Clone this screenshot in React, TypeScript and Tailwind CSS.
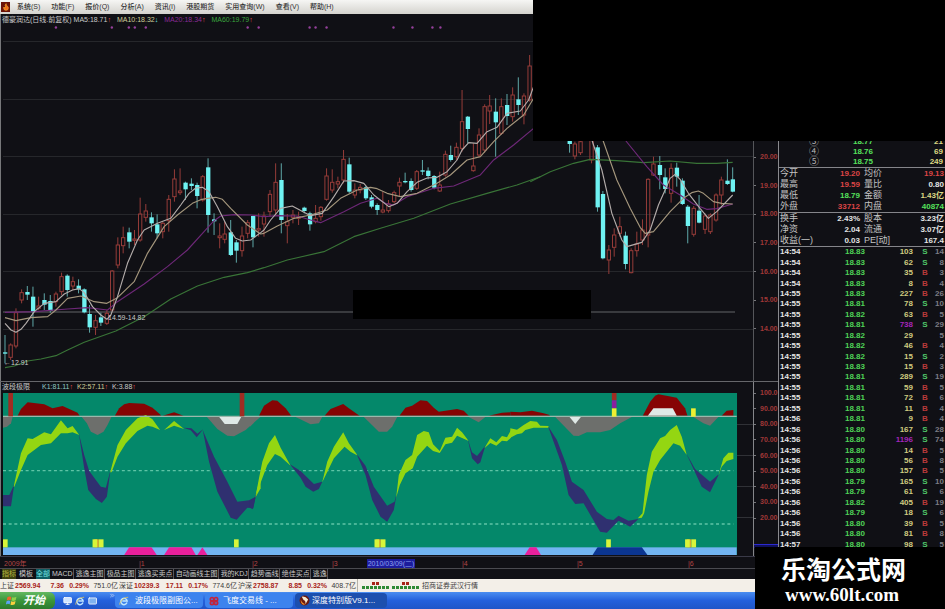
import React from 'react';
import { ChevronsRight, Monitor, Mail, Flame } from 'lucide-react';

// [direction, x, high, bodyTop, bodyBottom, low] - chart units are thirds of a pixel
type Candle = ['u' | 'd', number, number, number, number, number];

interface ChartSegment {
  dx: number;
  dy: number;
  candles: Candle[];
  ma5: string;
  ma10: string;
  ma20: string;
  ma60: string;
}

const SEGMENTS: ChartSegment[] = [
  {
    dx: 0,
    dy: 390,
    candles: [
      ['d', 12, 615, 667, 671, 700], ['u', 29, 640, 645, 682, 690], ['u', 45, 535, 548, 648, 655],
      ['u', 62, 478, 488, 510, 520], ['d', 79, 468, 486, 494, 510], ['d', 96, 470, 500, 545, 590],
      ['u', 113, 500, 528, 535, 540], ['d', 130, 490, 510, 524, 540], ['d', 148, 495, 513, 543, 548],
      ['u', 165, 485, 492, 515, 530], ['u', 182, 428, 440, 485, 495], ['d', 199, 433, 437, 480, 500],
      ['u', 216, 440, 455, 468, 480], ['d', 233, 448, 467, 478, 490], ['d', 250, 475, 478, 547, 550],
      ['d', 266, 525, 552, 592, 608], ['u', 284, 555, 572, 592, 615], ['d', 300, 548, 562, 578, 588],
      ['u', 318, 540, 550, 580, 585], ['u', 334, 420, 423, 540, 545], ['u', 351, 322, 345, 405, 415],
      ['u', 367, 290, 323, 347, 370], ['d', 385, 293, 307, 335, 355], ['u', 401, 300, 327, 331, 345],
      ['u', 418, 203, 252, 330, 335], ['u', 435, 222, 243, 262, 275], ['d', 452, 247, 262, 280, 305],
      ['d', 469, 253, 283, 310, 325], ['u', 486, 275, 280, 305, 325], ['u', 504, 195, 208, 272, 305],
      ['u', 521, 118, 147, 200, 215], ['u', 538, 115, 183, 188, 195], ['d', 554, 155, 158, 178, 210],
      ['d', 572, 145, 161, 168, 180], ['d', 589, 158, 165, 198, 235], ['u', 606, 135, 140, 210, 215],
      ['d', 622, 85, 112, 255, 308], ['d', 640, 250, 268, 274, 315], ['u', 657, 280, 318, 323, 355],
      ['u', 672, 275, 312, 328, 340], ['d', 690, 270, 307, 375, 378], ['d', 707, 330, 337, 362, 398],
      ['u', 724, 290, 318, 362, 380], ['u', 741, 270, 278, 310, 325], ['d', 757, 257, 258, 322, 352],
      ['u', 774, 250, 296, 300, 320], ['u', 790, 245, 258, 282, 320],
    ],
    ma5: '12,580 30,600 45,607 60,598 75,580 100,545 130,520 165,515 190,492 215,480 235,476 250,488 275,530 300,555 318,568 330,555 350,500 380,400 410,330 430,300 470,280 510,265 540,225 565,190 585,174 605,172 625,185 650,230 680,290 705,325 725,333 750,330 780,308 790,300',
    ma10: '12,563 45,572 90,563 140,560 165,540 200,505 240,498 280,515 318,520 350,503 400,455 440,370 490,290 530,255 575,220 600,209 620,205 645,202 665,208 690,235 740,285 780,312 790,310',
    ma20: '12,547 100,545 200,537 260,533 320,540 350,515 430,462 500,410 560,360 610,305 640,272 660,258 700,254 750,255 790,260',
    ma60: '12,713 40,708 80,693 120,687 165,677 200,660 250,637 345,603 430,560 510,507 590,468 670,442 740,428 790,413',
  },
  {
    dx: 780,
    dy: 180,
    candles: [
      ['u', 28, 390, 403, 455, 470], ['u', 45, 310, 367, 450, 465], ['d', 62, 310, 360, 480, 520],
      ['u', 80, 462, 485, 497, 550], ['u', 97, 450, 465, 472, 490], ['u', 114, 455, 470, 475, 495],
      ['d', 131, 440, 443, 453, 460], ['d', 148, 455, 460, 493, 512], ['u', 165, 435, 475, 485, 490],
      ['u', 181, 438, 442, 470, 482], ['u', 198, 325, 348, 418, 422], ['u', 215, 328, 367, 390, 398],
      ['u', 232, 350, 365, 372, 385], ['u', 249, 270, 298, 360, 370], ['d', 266, 293, 313, 395, 400],
      ['u', 283, 370, 390, 405, 415], ['u', 299, 372, 382, 390, 400], ['d', 316, 378, 382, 415, 420],
      ['d', 333, 405, 412, 440, 445], ['d', 350, 430, 435, 450, 465], ['u', 367, 395, 450, 456, 460],
      ['u', 384, 420, 432, 452, 458], ['u', 401, 392, 398, 425, 430], ['u', 417, 353, 367, 378, 410],
      ['d', 434, 338, 363, 367, 370], ['d', 452, 355, 363, 390, 395], ['u', 469, 330, 335, 385, 390],
      ['d', 486, 300, 331, 335, 345], ['d', 503, 322, 332, 348, 358], ['d', 521, 345, 348, 383, 388],
      ['u', 538, 335, 375, 393, 396], ['u', 555, 272, 283, 345, 350], ['d', 571, 257, 285, 300, 305],
      ['u', 588, 248, 262, 290, 300], ['u', 605, 90, 185, 265, 275], ['d', 622, 168, 170, 207, 250],
      ['u', 639, 250, 318, 332, 335], ['u', 656, 205, 225, 285, 292], ['u', 673, 133, 140, 270, 278],
      ['u', 688, 105, 138, 153, 192], ['d', 706, 115, 155, 187, 290], ['u', 723, 115, 140, 220, 225],
      ['d', 740, 102, 135, 168, 195], ['u', 757, 82, 105, 170, 185], ['d', 774, 52, 118, 135, 165],
      ['u', 791, 100, 108, 165, 193], ['u', 808, -15, 18, 120, 125],
    ],
    ma5: '10,510 30,480 60,445 95,438 130,457 150,467 185,460 220,410 250,363 280,362 310,370 340,405 385,440 410,430 440,395 470,367 500,354 530,352 560,335 590,300 605,270 625,248 650,250 680,215 710,202 740,160 780,153 805,120 820,80',
    ma10: '10,520 50,498 100,475 150,465 200,450 240,415 290,390 330,382 350,386 380,400 420,410 470,400 530,370 570,345 620,300 660,290 700,245 740,205 790,165 820,115',
    ma20: '10,470 50,467 110,468 150,480 180,488 250,455 300,430 350,415 375,430 400,435 440,410 520,385 580,378 660,345 700,300 760,255 820,205',
    ma60: '10,623 80,600 190,575 280,530 360,505 460,475 570,432 680,400 770,375 840,350',
  },
  {
    dx: 1590,
    dy: 390,
    candles: [
      ['d', 118, 20, 22, 42, 68], ['u', 134, 35, 42, 78, 88], ['u', 151, 30, 35, 68, 75],
      ['u', 184, 20, 22, 90, 100], ['d', 202, 45, 52, 232, 245], ['d', 218, 183, 192, 385, 388],
      ['u', 236, 345, 360, 390, 432], ['u', 252, 295, 315, 352, 380], ['u', 269, 260, 290, 310, 320],
      ['d', 286, 305, 317, 402, 418], ['u', 303, 355, 362, 428, 430], ['u', 320, 305, 342, 362, 380],
      ['u', 337, 268, 300, 330, 345], ['u', 354, 145, 148, 315, 352], ['u', 370, 80, 102, 135, 138],
      ['d', 389, 78, 105, 135, 178], ['d', 405, 115, 142, 177, 190], ['u', 423, 100, 115, 190, 218],
      ['d', 440, 98, 113, 140, 170], ['d', 457, 145, 152, 222, 225], ['d', 473, 225, 230, 288, 340],
      ['u', 491, 228, 235, 313, 320], ['d', 507, 195, 242, 278, 280], ['u', 525, 250, 258, 298, 312],
      ['u', 541, 250, 255, 305, 312], ['u', 558, 190, 195, 270, 275], ['u', 574, 140, 150, 195, 225],
      ['d', 592, 88, 152, 162, 165], ['d', 608, 112, 148, 185, 187],
    ],
    ma5: '185,30 215,120 245,250 275,330 290,350 335,337 360,300 385,225 405,180 420,145 435,133 450,148 475,190 510,235 535,265 560,245 608,195',
    ma10: '218,30 260,150 300,235 330,292 345,310 370,305 420,245 460,205 485,188 505,183 520,190 550,215 575,220 608,222',
    ma20: '285,30 350,110 400,165 450,195 490,222 530,238 560,236 608,222',
    ma60: '0,155 60,125 130,100 180,88 260,92 340,98 420,93 500,100 560,100 608,97',
  },
];

const GRID_LINES = [41, 99, 156, 214, 271, 329];
const SIGNAL_DOTS = [55, 111, 128, 134, 145, 247, 258, 309, 315, 326, 393, 412, 432, 440];

const RED = '#860404';
const GREY = '#6d6f6c';
const LIME = '#94d612';
const NAVY = '#2f3070';
const WHITE = '#dfe9e6';
const PINK = '#e8209c';

// [fill, points] - indicator areas, same units as the candles
const AREAS: { dx: number; shapes: [string, string][] }[] = [
  {
    dx: 0,
    shapes: [
      [RED, '50,122 60,102 80,82 130,88 155,100 185,93 205,102 230,113 236,122'],
      [RED, '342,122 355,100 370,88 385,84 430,86 455,98 480,120 480,122'],
      [RED, '486,122 520,112 548,122'],
      [GREY, '6,125 35,125 30,145 18,155 6,158'],
      [GREY, '242,125 332,125 320,150 308,170 290,180 270,170 258,145'],
      [GREY, '618,125 780,125 735,165 700,184 680,182 650,162'],
      [WHITE, '655,125 722,125 710,147 672,147'],
      [NAVY, '6,360 25,360 40,328 30,394 6,394'],
      [LIME, '38,335 60,235 80,190 95,192 130,172 150,178 180,136 200,160 215,153 235,180 215,172 200,175 180,175 150,205 120,210 80,240 60,285 40,335'],
      [NAVY, '234,176 250,240 265,288 300,335 315,338 329,285 318,365 303,384 285,372 262,345 250,280'],
      [LIME, '328,292 350,210 375,165 410,130 435,120 455,133 478,165 455,155 440,152 410,168 375,205 350,245 332,292'],
      [LIME, '490,165 520,138 550,162 520,152'],
      [NAVY, '548,158 572,160 590,176 607,163 588,187 570,166'],
      [NAVY, '606,165 640,245 680,320 710,380 745,376 765,365 758,400 740,398 708,434 690,428 650,350 625,260'],
      [LIME, '763,370 780,300 780,340'],
      [PINK, '370,540 385,517 452,517 468,540'],
      [PINK, '490,540 505,517 572,517 585,540'],
      [PINK, '590,540 605,517 620,540'],
    ],
  },
  {
    dx: 750,
    shapes: [
      [RED, '25,122 40,92 65,76 80,77 105,100 122,122'],
      [RED, '222,122 240,102 278,87 295,100 327,122'],
      [RED, '447,122 465,98 485,92 510,76 530,78 550,98 565,110 620,102 640,107 655,122'],
      [RED, '715,122 755,113 780,112 780,122'],
      [GREY, '-2,126 17,126 8,145 -2,155'],
      [GREY, '135,126 215,126 205,145 180,148'],
      [GREY, '340,126 440,126 425,155 410,170 385,170'],
      [GREY, '655,126 705,126 685,142'],
      [NAVY, '-2,378 10,375 18,352 6,403 -2,398'],
      [LIME, '15,362 25,310 35,260 55,205 73,180 90,218 120,272 90,245 73,237 50,270 35,310'],
      [NAVY, '118,268 150,288 190,327 215,320 205,342 188,350 165,335 150,308'],
      [LIME, '215,322 230,260 250,215 278,172 295,205 322,242 300,230 282,215 250,250'],
      [NAVY, '318,236 345,272 370,335 410,392 432,380 439,355 430,405 410,440 390,425 365,375 345,300'],
      [LIME, '437,368 445,300 465,255 485,240 500,180 520,168 535,172 548,208 568,228 585,188 605,185 620,158 635,172 655,198 620,182 605,203 585,208 568,234 548,228 530,212 500,245 487,280 465,295 448,330'],
      [NAVY, '652,192 665,232 680,243 705,212 690,262 682,268 665,250'],
      [LIME, '702,220 720,190 738,202 755,183 770,187 782,165 782,188 770,199 755,197 738,212 720,204'],
    ],
  },
  {
    dx: 1530,
    shapes: [
      [RED, '0,110 30,112 65,107 100,115 118,120 118,122 0,122'],
      [RED, '398,122 420,80 435,62 445,58 500,68 525,100 532,122'],
      [RED, '635,122 650,107 670,105 670,122'],
      [WHITE, '413,122 430,100 488,100 500,122'],
      [GREY, '135,126 365,126 330,145 300,165 270,172 230,172 205,183 190,182'],
      [GREY, '550,126 625,126 600,152 580,145'],
      [WHITE, '178,126 212,126 195,147'],
      [LIME, '0,160 20,164 40,150 60,138 80,140 90,152 115,153 115,158 90,158 70,158 45,165 35,175 20,178 0,188'],
      [NAVY, '113,153 140,195 165,260 185,320 220,345 260,410 290,432 310,435 325,422 355,437 385,432 360,455 325,437 290,473 270,470 220,385 195,387 175,360 155,270'],
      [LIME, '383,430 397,415 410,300 425,230 450,190 465,183 480,165 500,150 515,185 530,240 510,212 490,205 450,255 430,290 415,350 402,415 395,428'],
      [NAVY, '528,234 555,282 600,320 627,297 600,352 575,335'],
      [LIME, '625,302 640,250 655,233 670,233 670,252 650,258 635,275'],
      [PINK, '43,540 58,517 78,517 92,540'],
      ['#0b3591', '247,540 262,517 395,517 412,540'],
    ],
  },
];

// [x, y, height, fill]
const MARKERS: [number, number, number, string][] = [
  [22, 54, 70, '#a02c22'], [717, 54, 70, '#a02c22'], [1835, 54, 22, '#a02c22'], [1835, 76, 24, '#8a1fa0'],
  [1835, 100, 25, '#eef032'], [2073, 100, 25, '#eef032'], [6, 493, 24, '#d8f53a'], [280, 493, 24, '#d8a82a'],
  [275, 493, 24, '#d8f53a'], [294, 493, 24, '#d8f53a'], [700, 493, 24, '#d8f53a'], [1127, 493, 24, '#d8a82a'],
  [1122, 493, 24, '#d8f53a'], [1141, 493, 24, '#d8f53a'], [1818, 493, 24, '#d8f53a'], [2060, 493, 24, '#d8a82a'],
  [2055, 493, 24, '#d8f53a'], [2074, 493, 24, '#d8f53a'],
];

const MENU = ['系统(S)', '功能(F)', '报价(Q)', '分析(A)', '资讯(I)', '港股期货', '实用查询(W)', '查看(V)', '帮助(H)'];

const TABS = ['MACD', '逃逸主图', '极品主图', '逃逸买卖点', '自动画线主图', '我的KDJ', '趋势画线', '绝佳买点', '逃逸'];

const BOOK = [
  ['③', '18.77', '21'],
  ['④', '18.76', '69'],
  ['⑤', '18.75', '249'],
];

const C_RED = 'text-[#dc4545]';
const C_GREEN = 'text-[#56e05c]';
const C_YELLOW = 'text-[#dcd884]';
const C_WHITE = 'text-[#e4e4e4]';

const QUOTES = [
  ['今开', '19.20', C_RED, '均价', '19.13', C_RED],
  ['最高', '19.59', C_RED, '量比', '0.80', C_WHITE],
  ['最低', '18.79', C_GREEN, '金额', '1.43亿', C_YELLOW],
  ['外盘', '33712', C_RED, '内盘', '40874', C_GREEN],
];

const FUNDAMENTALS = [
  ['换手', '2.43%', C_WHITE, '股本', '3.23亿', C_WHITE],
  ['净资', '2.04', C_WHITE, '流通', '3.07亿', C_WHITE],
  ['收益(一)', '0.03', C_WHITE, 'PE[动]', '167.4', C_WHITE],
];

const TRADES = [
  ['14:54', '18.83', '103', 'S', '14'], ['14:54', '18.83', '62', 'S', '8'], ['14:54', '18.83', '35', 'B', '3'],
  ['14:54', '18.83', '8', 'B', '4'], ['14:55', '18.83', '227', 'B', '26'], ['14:55', '18.81', '78', 'S', '10'],
  ['14:55', '18.82', '63', 'B', '5'], ['14:55', '18.81', '738', 'S', '29'], ['14:55', '18.82', '29', '', '5'],
  ['14:55', '18.82', '46', 'B', '4'], ['14:55', '18.82', '15', 'S', '2'], ['14:55', '18.83', '15', 'B', '3'],
  ['14:55', '18.81', '289', 'S', '19'], ['14:55', '18.81', '59', 'B', '5'], ['14:55', '18.81', '72', 'B', '6'],
  ['14:55', '18.81', '11', 'B', '4'], ['14:56', '18.81', '9', 'B', '4'], ['14:56', '18.80', '167', 'S', '28'],
  ['14:56', '18.80', '1196', 'S', '74'], ['14:56', '18.80', '14', 'B', '5'], ['14:56', '18.80', '56', 'B', '8'],
  ['14:56', '18.80', '157', 'B', '5'], ['14:56', '18.79', '165', 'S', '10'], ['14:56', '18.79', '61', 'S', '6'],
  ['14:56', '18.82', '405', 'B', '19'], ['14:56', '18.79', '18', 'S', '6'], ['14:56', '18.80', '39', 'B', '5'],
  ['14:56', '18.80', '81', 'B', '8'], ['14:57', '18.80', '98', 'S', '5'],
];

const MenuBar = () => (
  <nav className="flex h-[14px] items-center bg-gradient-to-b from-[#f6f6f4] to-[#d4d3ce] pl-px text-[7px] font-medium leading-[14px] text-[#333]">
    <span className="flex h-[10px] w-[9px] items-center justify-center bg-[#6b1208]">
      <Flame size={8} className="text-[#ffb52e]" fill="#f26a1b" />
    </span>
    <div className="flex gap-[11px] pl-[7px]">
      {MENU.map((item) => (
        <button key={item} type="button" className="whitespace-nowrap">{item}</button>
      ))}
    </div>
  </nav>
);

const Up = () => <span className="font-bold text-[#f05050]">↑</span>;

const CandleChart = () => (
  <svg viewBox="0 26 753 355" preserveAspectRatio="none" className="block h-[355px] w-full">
    {GRID_LINES.map((y) => (
      <line key={y} x1="2" x2="753" y1={y + 0.5} y2={y + 0.5} stroke="#26272b" />
    ))}
    <line x1="2" x2="735" y1="312" y2="312" stroke="#47484c" strokeWidth="1.4" />
    {SIGNAL_DOTS.map((x) => (
      <circle key={x} cx={x} cy="27.5" r="1.2" fill="#95409c" />
    ))}
    <g transform="scale(0.33333)">
      {SEGMENTS.map((seg) => (
        <g key={seg.dx} transform={`translate(${seg.dx} ${seg.dy})`} fill="none">
          {seg.candles.map(([dir, x, high, top, bottom, low]) =>
            dir === 'd' ? (
              <g key={x}>
                <line x1={x} x2={x} y1={high} y2={low} stroke="#5fa9a9" strokeWidth="3" />
                <rect x={x - 6} y={top} width="13" height={bottom - top} fill="#6ff2f2" />
              </g>
            ) : (
              <g key={x} stroke="#963c39" strokeWidth="3">
                <path d={`M${x} ${high}V${top}M${x} ${bottom}V${low}`} />
                <rect x={x - 5} y={top} width="10" height={bottom - top} />
              </g>
            )
          )}
          <g strokeWidth="3.4" strokeLinejoin="round">
            <polyline points={seg.ma60} stroke="#397437" />
            <polyline points={seg.ma20} stroke="#6e2878" />
            <polyline points={seg.ma10} stroke="#a5977d" />
            <polyline points={seg.ma5} stroke="#b4adab" />
          </g>
        </g>
      ))}
    </g>
  </svg>
);

const IndicatorChart = () => (
  <svg viewBox="0 393 753 163" preserveAspectRatio="none" className="block h-[163px] w-full">
    <rect x="2" y="393" width="735" height="162" fill="#04886a" />
    <path d="M737 424.5h16M737 455.5h16M737 486.5h16M737 517.5h16" stroke="#303136" />
    <g transform="translate(0 375) scale(0.33333)">
      <rect x="6" y="517" width="2204" height="23" fill="#72b4f2" />
      <path d="M6 287H2200M6 447H2200" stroke="#5fc4a6" strokeWidth="4" strokeDasharray="9 8" />
      {AREAS.map((area) => (
        <g key={area.dx} transform={`translate(${area.dx} 0)`}>
          {area.shapes.map(([fill, points]) => (
            <polygon key={points} points={points} fill={fill} />
          ))}
        </g>
      ))}
      <path d="M6 124H2210" stroke="#9cb8ac" strokeWidth="4" />
      {MARKERS.map(([x, y, height, fill]) => (
        <rect key={`${x}-${y}`} x={x} y={y} width="14" height={height} fill={fill} />
      ))}
    </g>
  </svg>
);

const QuoteRows = ({ rows }: { rows: string[][] }) => (
  <div className="border-b border-[#85858a] px-px">
    {rows.map(([label, value, color, label2, value2, color2]) => (
      <div key={label} className="grid h-[11px] grid-cols-2 gap-1 whitespace-nowrap leading-[11px]">
        <div className="flex justify-between">
          <span className="text-[9px] font-normal text-[#c4c4c4]">{label}</span>
          <span className={color}>{value}</span>
        </div>
        <div className="flex justify-between">
          <span className="text-[9px] font-normal text-[#c4c4c4]">{label2}</span>
          <span className={color2}>{value2}</span>
        </div>
      </div>
    ))}
  </div>
);

const QuotePanel = () => (
  <aside className="w-[167px] shrink-0 overflow-hidden border-l border-[#8a8a8e] pt-[123px] text-[8px] font-bold">
    <div className="border-b border-[#85858a]">
      {BOOK.map(([level, price, volume]) => (
        <div key={level} className="grid h-[10px] grid-cols-[40px_54px_1fr] pr-0.5 text-right leading-[10px]">
          <span className="text-[10px] font-normal text-[#b4b4b4]">{level}</span>
          <span className={C_GREEN}>{price}</span>
          <span className={C_YELLOW}>{volume}</span>
        </div>
      ))}
    </div>
    <QuoteRows rows={QUOTES} />
    <QuoteRows rows={FUNDAMENTALS} />
    <table className="h-[303px] w-full table-fixed leading-[8px]">
      <tbody>
        {TRADES.map(([time, price, volume, side, count], i) => (
          <tr key={i}>
            <td className="w-[26px] p-0 pl-px text-[#e4e4e4]">{time}</td>
            <td className="w-[60px] p-0 text-right text-[#4fd257]">{price}</td>
            <td className={`w-[48px] p-0 text-right ${Number(volume) > 500 ? 'text-[#a425b8]' : 'text-[#cfcb80]'}`}>{volume}</td>
            <td className={`w-[20px] p-0 pl-1 text-center ${side === 'S' ? 'text-[#4fc76a]' : 'text-[#b93a3a]'}`}>{side}</td>
            <td className="p-0 pr-px text-right text-[#7d7d84]">{count}</td>
          </tr>
        ))}
      </tbody>
    </table>
  </aside>
);

const Axis = ({ labels }: { labels: string[] }) => (
  <>
    {labels.map((label) => (
      <div key={label} className="flex h-2 items-center gap-1 text-[7px] font-bold leading-[8px] text-[#a03838]">
        <span className="h-px w-[2px] shrink-0 bg-[#77777b]" />
        {label}
      </div>
    ))}
  </>
);

const DateAxis = () => (
  <div className="grid h-3 grid-cols-[135fr_113fr_80fr_130fr_115fr_111fr_90fr] items-end border-t border-[#3a3a48] pl-1 text-[7px] leading-[9px] text-[#b04545]">
    <span>2009年</span>
    <span>|1</span>
    <span>|2</span>
    <span className="flex gap-[29px]">
      |3
      <span className="whitespace-nowrap bg-[#1c1c9c] px-px text-[#8fa0f0]">2010/03/09(二)</span>
    </span>
    <span>|4</span>
    <span>|5</span>
    <span>|6</span>
  </div>
);

const IndicatorTabs = () => (
  <div className="flex h-[11px] gap-0.5 whitespace-nowrap border-t border-[#4a4a50] pl-0.5 text-[7px] leading-[10px] text-[#c8c8c8]">
    <button type="button" className="bg-[#3c4010] text-[#b5b340]">指标</button>
    <button type="button" className="px-px">模板</button>
    <button type="button" className="bg-[#0f5c63] text-[#6fe0e0]">全部</button>
    {TABS.map((tab) => (
      <button key={tab} type="button" className="border-r border-[#55555a]">{tab}</button>
    ))}
  </div>
);

const Breadth = () => (
  <div className="flex flex-col items-center gap-px">
    <div className="flex gap-px">
      <span className="h-[3px] w-[3px] bg-[#a82418]" />
      <span className="h-[3px] w-[3px] bg-[#a82418]" />
    </div>
    <div className="flex gap-px">
      {[0, 1, 2, 3, 4, 5, 6].map((n) => (
        <span key={n} className="h-[3px] w-[3px] bg-[#2f8a34]" />
      ))}
    </div>
  </div>
);

const TICKERS = [
  ['上证', '2569.94', '7.36', '0.29%', '751.0亿'],
  ['深证', '10239.3', '17.11', '0.17%', '774.6亿'],
  ['沪深', '2758.87', '8.85', '0.32%', '408.7亿'],
];

const Ticker = () => (
  <div className="flex h-[13px] items-center whitespace-nowrap bg-[#f3efe8] text-[7px] leading-[13px] text-[#3a3a3a]">
    {TICKERS.map(([name, price, change, percent, amount]) => (
      <div key={name} className="flex w-[119px]">
        <span className="w-[15px] shrink-0">{name}</span>
        <span className="w-[28px] shrink-0 font-bold text-[#a82418]">{price}</span>
        <span className="w-[21px] shrink-0 text-right font-bold text-[#a82418]">{change}</span>
        <span className="w-[25px] shrink-0 text-right font-bold text-[#a82418]">{percent}</span>
        <span className="w-[29px] shrink-0 text-right">{amount}</span>
      </div>
    ))}
    <div className="flex items-center gap-[3px] border-l border-[#b5b1a8] pl-1">
      <Breadth />
      <Breadth />
      <span>招商证券武汉行情</span>
    </div>
  </div>
);

const IeIcon = () => (
  <svg viewBox="0 0 12 12" className="h-[10px] w-[10px] shrink-0">
    <path d="M9.6 7.9A3.8 3.8 0 1 1 9.8 6H4" fill="none" stroke="#bfe6ff" strokeWidth="1.8" />
    <path d="M1 10.5C0 8 5 1.5 11 1.5" fill="none" stroke="#f2cf52" strokeWidth="0.9" />
  </svg>
);

const Taskbar = () => (
  <footer className="flex h-[17px] items-stretch whitespace-nowrap bg-gradient-to-b from-[#4a8df0] via-[#2460dc] to-[#1f55c8] text-[8px] text-white">
    <button type="button" className="flex w-[55px] items-center gap-1.5 rounded-r-md bg-gradient-to-b from-[#63b860] via-[#3a963a] to-[#2c7a2c] pl-1.5 text-[11px] font-bold italic leading-none">
      <svg viewBox="0 0 12 12" className="h-[11px] w-[11px]">
        <path d="M1.5 2.5Q3.5 1 5.8 2.2L5 5.8Q3 4.6.8 6Z" fill="#f0642c" />
        <path d="M6.6 2.4Q9 3.4 11.4 2L10.6 5.6Q8.4 7 5.9 6Z" fill="#8fd14a" />
        <path d="M.6 6.8Q2.8 5.4 4.8 6.6L4 10.2Q2 9-.2 10.4Z" fill="#5ba3f4" />
        <path d="M5.6 6.9Q8 8 10.4 6.5L9.6 10.1Q7.4 11.5 4.9 10.5Z" fill="#f7cf3e" />
      </svg>
      开始
    </button>
    <div className="flex w-[60px] items-center gap-[3px] pl-2">
      <Monitor size={10} fill="#cfe4ff" />
      <IeIcon />
      <Mail size={10} fill="#7fb2f0" />
      <ChevronsRight size={7} className="ml-2 self-start" />
    </div>
    <div className="flex gap-0.5 py-px">
      <button type="button" className="flex w-[88px] items-center gap-1.5 rounded-sm bg-[#3d83ee] pl-1">
        <IeIcon />波段极限副图公...
      </button>
      <button type="button" className="flex w-[88px] items-center gap-1 rounded-sm bg-[#3d83ee] pl-1">
        <svg viewBox="0 0 12 12" className="h-[10px] w-[10px] shrink-0" fill="none" stroke="#c3243c" strokeWidth="2">
          <circle cx="3.6" cy="3.8" r="2" /><circle cx="8.4" cy="3.8" r="2" />
          <circle cx="3.6" cy="8.4" r="2" /><circle cx="8.4" cy="8.4" r="2" />
        </svg>
        飞度交易线 - ...
      </button>
      <button type="button" className="flex w-[92px] items-center gap-0.5 rounded-sm bg-[#1c4fae] pl-1">
        <svg viewBox="0 0 12 12" className="h-[11px] w-[11px] shrink-0">
          <circle cx="6" cy="6" r="5.4" fill="#6b1a10" />
          <path d="M3 1.8Q7 1 10 5L7 10Q7.5 6 5 5.5Z" fill="#f7ead0" />
          <path d="M2 5Q3 9 7 10L4.5 10.6Q1.5 9 2 5Z" fill="#f0912c" />
        </svg>
        深度特别版V9.1...
      </button>
    </div>
  </footer>
);

export default function App() {
  return (
    <div
      className={`relative flex min-h-screen flex-col overflow-hidden bg-[#101015] font-['Liberation_Sans','Noto_Sans_CJK_SC',sans-serif]`}
    >
      <MenuBar />
      <div className="flex">
        <main className="min-w-0 flex-1">
          <div className="flex">
            <section className="relative min-w-0 flex-1 border-l border-[#77787a]">
              <div className="flex h-3 gap-1.5 whitespace-nowrap pl-px text-[7px] leading-[12px] text-[#c9c9c9]">
                <span>德豪润达(日线.前复权) MA5:18.71<Up /></span>
                <span className="text-[#d0cf9a]">
                  MA10:18.32<span className="font-bold text-[#6ff2f2]">↓</span>
                </span>
                <span className="text-[#8a2b96]">MA20:18.34<Up /></span>
                <span className="text-[#3aa53e]">MA60:19.79<Up /></span>
              </div>
              <CandleChart />
              <span className="absolute left-[107px] top-[299px] text-[7px] leading-[10px] text-[#c9c9c9]">14.59-14.82</span>
              <span className="absolute left-[3px] top-[344px] text-[7px] leading-[10px] text-[#c9c9c9]">←12.91</span>
              <div className="absolute left-[352px] top-[276px] h-[29px] w-[238px] bg-black" />
            </section>
            <div className="flex w-[25px] shrink-0 flex-col justify-between border-l border-[#55565a] pb-12 pt-[139px]">
              <Axis labels={['20.00', '19.00', '18.00', '17.00', '16.00', '15.00', '14.00']} />
            </div>
          </div>
          <div className="flex border-t border-[#66676b]">
            <section className="min-w-0 flex-1 border-l border-[#77787a]">
              <div className="flex h-[11px] gap-1 whitespace-nowrap pl-px text-[7px] leading-[10px] text-[#c9c9c9]">
                <span className="mr-2">波段极限</span>
                <span className="text-[#8fc9c4]">K1:81.11<Up /></span>
                <span className="text-[#d0cf9a]">K2:57.11<Up /></span>
                <span>K:3.88<Up /></span>
              </div>
              <IndicatorChart />
            </section>
            <div className="flex w-[25px] shrink-0 flex-col border-l border-[#85868a]">
              <div className="flex h-[140px] flex-col justify-between overflow-hidden pt-[7px]">
                <Axis labels={['100.0', '90.00', '80.00', '70.00', '60.00', '50.00', '40.00', '30.00', '20.00']} />
              </div>
              <div className="mt-[22px] h-1 border-t border-[#2a2ad0] bg-[#10105c]" />
            </div>
          </div>
          <DateAxis />
          <IndicatorTabs />
        </main>
        <QuotePanel />
      </div>
      <Ticker />
      <Taskbar />

      <div className="absolute right-0 top-0 h-[141px] w-[412px] bg-black" />
      <div className="absolute bottom-0 right-0 h-[62px] w-[190px] bg-black pl-[26px] pt-2 text-white">
        <div className="text-[25px] font-bold leading-[30px]">乐淘公式网</div>
        <a
          href="#"
          className="block pl-1 font-['Liberation_Serif',serif] text-[19px] font-bold leading-[20px]"
        >
          www.60lt.com
        </a>
      </div>
    </div>
  );
}
